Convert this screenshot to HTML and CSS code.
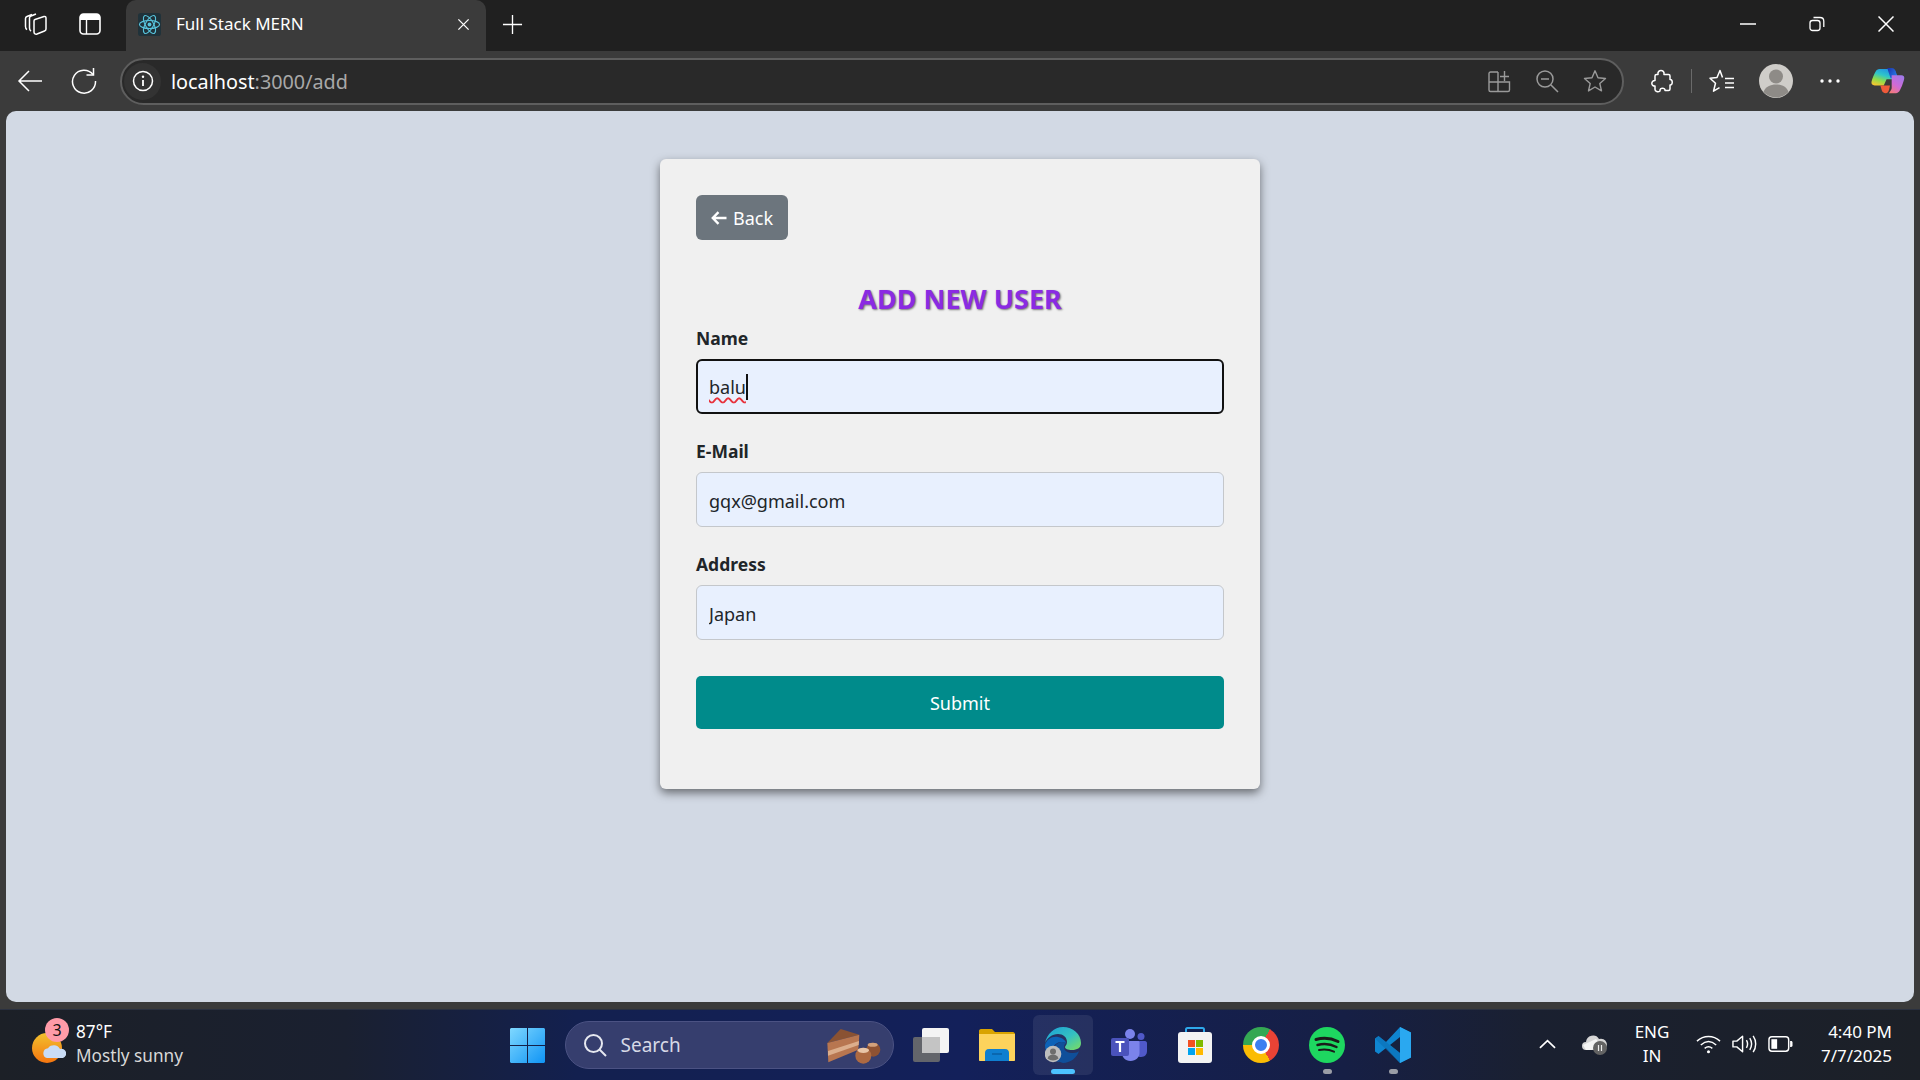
FILE: index.html
```html
<!DOCTYPE html>
<html lang="en">
<head>
    <meta charset="UTF-8">
    <meta name="viewport" content="width=device-width, initial-scale=1.0">
    <title>Full Stack MERN</title>
    <link rel="stylesheet" href="styles.css">
</head>
<body>
    <!-- Tab strip -->
    <header class="tabstrip">
        <div class="strip-left">
            <svg class="strip-icon" viewBox="0 0 26 26" fill="none" stroke="#fff" stroke-width="1.5"><path d="M9 3.500 4 5.500c-1 .4-1.500 1-1.500 2v8c0 1.500.5 2.500 1.500 3.200"/><path d="M13 3 8 5c-1 .4-1.500 1-1.500 2v10c0 1.500.5 2.500 1.500 3.200"/><path d="M12 8.500 21 5.500c1-.3 2 .3 2 1.500v11c0 1-.5 1.700-1.500 2L14 23c-1.500.5-3-.3-3-2V10c0-.7.4-1.300 1-1.500Z"/></svg>
            <svg class="strip-icon" viewBox="0 0 26 26"><rect x="3" y="3" width="20" height="20" rx="3.500" fill="none" stroke="#fff" stroke-width="1.600"/><path d="M3 6.500C3 4.500 4.500 3 6.500 3h13C21.500 3 23 4.500 23 6.500V9H3Z" fill="#fff"/><path d="M9.500 9v14" stroke="#fff" stroke-width="1.400"/></svg>
        </div>
        <div class="tab">
            <svg class="favicon" viewBox="0 0 24 24"><rect width="24" height="24" rx="3" fill="#20323a"/><g fill="none" stroke="#58c4dc" stroke-width="1.200"><ellipse cx="12" cy="12" rx="10.500" ry="4.200"/><ellipse cx="12" cy="12" rx="10.500" ry="4.200" transform="rotate(60 12 12)"/><ellipse cx="12" cy="12" rx="10.500" ry="4.200" transform="rotate(120 12 12)"/></g><circle cx="12" cy="12" r="2" fill="#58c4dc"/></svg>
            <span class="tab-title">Full Stack MERN</span>
            <svg class="tab-close" viewBox="0 0 14 14" stroke="#fff" stroke-width="1.400"><path d="M1.500 1.500l11 11M12.500 1.500l-11 11"/></svg>
        </div>
        <svg class="new-tab" viewBox="0 0 22 22" stroke="#fff" stroke-width="1.400"><path d="M11 1v20M1 11h20"/></svg>
        <div class="window-controls">
            <svg viewBox="0 0 16 16" stroke="#fff" stroke-width="1.500"><path d="M0 8h16"/></svg>
            <svg viewBox="0 0 16 16" fill="none" stroke="#fff" stroke-width="1.300"><rect x="1" y="4.500" width="10" height="10" rx="2.500"/><path d="M4.500 1.500h6.500c2.200 0 3.800 1.600 3.800 3.800V11"/></svg>
            <svg viewBox="0 0 16 16" stroke="#fff" stroke-width="1.500"><path d="M.5.500l15 15M15.500.500l-15 15"/></svg>
        </div>
    </header>

    <!-- Toolbar -->
    <nav class="toolbar">
        <svg class="nav-icon nav-back" viewBox="0 0 26 26" fill="none" stroke="#fff" stroke-width="1.500"><path d="M25 13H2M12 3 2 13l10 10"/></svg>
        <svg class="nav-icon nav-reload" viewBox="0 0 26 26" fill="none" stroke="#fff" stroke-width="1.500"><path d="M22 6.500A11.500 11.500 0 1 0 24.500 13"/><path d="M22.500 0v7h-7"/></svg>
        <div class="addressbar">
            <span class="site-info">
                <svg viewBox="0 0 22 22"><circle cx="11" cy="11" r="9.500" fill="none" stroke="#fff" stroke-width="1.500"/><path d="M11 10v6" stroke="#fff" stroke-width="1.800"/><circle cx="11" cy="6.800" r="1.200" fill="#fff"/></svg>
            </span>
            <span class="url"><b>localhost</b>:3000/add</span>
            <div class="address-actions">
                <svg viewBox="0 0 24 24" fill="none" stroke="#9a9a9a" stroke-width="1.400"><path d="M11 3H3.500C2.700 3 2 3.700 2 4.500V21c0 .8.700 1.500 1.500 1.500H21c.8 0 1.500-.7 1.500-1.500V13H2M11 3v19.500M13 7.500h9M17.500 2v10"/></svg>
                <svg viewBox="0 0 24 24" fill="none" stroke="#9a9a9a" stroke-width="1.500"><circle cx="10" cy="10" r="8"/><path d="M6 10h8M16 16l7 7"/></svg>
                <svg viewBox="0 0 24 24" fill="none" stroke="#9a9a9a" stroke-width="1.400"><path d="M12 1.800l3 7 7.500.7-5.700 5 1.700 7.400-6.500-3.900-6.500 3.900 1.700-7.400-5.700-5 7.500-.7Z" stroke-linejoin="round"/></svg>
            </div>
        </div>
        <svg class="tool-icon tool-ext" viewBox="0 0 24 24" fill="none" stroke="#fff" stroke-width="1.500" stroke-linejoin="round"><path d="M9 5.500C8.500 2.500 10.500 1.500 12 1.500s3.500 1 3 4h4.500c.8 0 1.500.7 1.500 1.500v3.500c3-.5 3 6 0 5.500V20c0 .8-.7 1.500-1.500 1.500H16c.5-3-5.500-3.500-5 .5-2 1.500-5 .5-5-1.500V17c-4 .5-4.500-5.500 0-5.500V7c0-.8.700-1.500 1.500-1.500Z"/></svg>
        <span class="tool-divider"></span>
        <svg class="tool-icon tool-fav" viewBox="0 0 26 24" fill="none" stroke="#fff" stroke-width="1.500" stroke-linejoin="round"><path d="M13.500 8.500 11 1.500 8 8.500l-7 .7 5.500 5-2 8 6-3.500"/><path d="M16 9.500h9M16 14h9M16 18.500h9"/></svg>
        <svg class="tool-icon tool-avatar" viewBox="0 0 34 34"><circle cx="17" cy="17" r="17" fill="#cfcdc9"/><circle cx="17" cy="12.500" r="7" fill="#8e8b87"/><path d="M4.500 28c2-5.500 7-7.500 12.500-7.500S27.500 22.500 29.500 28a17 17 0 0 1-25 0Z" fill="#8e8b87"/></svg>
        <svg class="tool-icon tool-more" viewBox="0 0 20 4" fill="#fff"><circle cx="2" cy="2" r="1.700"/><circle cx="10" cy="2" r="1.700"/><circle cx="18" cy="2" r="1.700"/></svg>
        <svg class="tool-icon tool-copilot" viewBox="15 18 120 96">
            <defs>
                <linearGradient id="cpA" x1="0.7" y1="0" x2="0.2" y2="1"><stop offset="0" stop-color="#1f8fe8"/><stop offset=".4" stop-color="#2fc6c8"/><stop offset=".7" stop-color="#8fdc4a"/><stop offset="1" stop-color="#f7c62f"/></linearGradient>
                <linearGradient id="cpB" x1="0" y1="0" x2="1" y2="0.600"><stop offset="0" stop-color="#1a2fa8"/><stop offset="1" stop-color="#2a7be8"/></linearGradient>
                <linearGradient id="cpC" x1="0.800" y1="0" x2="0.200" y2="1"><stop offset="0" stop-color="#a07ae8"/><stop offset=".55" stop-color="#d06ad8"/><stop offset="1" stop-color="#f47a7a"/></linearGradient>
            </defs>
            <path d="M45 24h42c10 0 14 6 16 14l7 22H70L60 82H28c-9 0-13-7-11-14 3-12 8-26 14-35 3-6 8-9 14-9Z" fill="url(#cpA)"/>
            <path d="M72 20h15c10 0 14 6 16 14l7 22H84L76 32c-1-5-2-9-4-12Z" fill="url(#cpB)"/>
            <path d="M88 46h34c8 0 12 5 10 13-3 13-10 32-15 40-3 6-8 10-14 10H78c5-5 8-10 10-17Z" fill="url(#cpC)"/>
            <path d="M48 82h34l-3 14c-2 8-6 13-12 13-8 0-12-4-14-10Z" fill="#ef5a3a"/>
        </svg>
    </nav>

    <!-- Page -->
    <div class="viewport">
        <main class="page">
            <div class="card">
                <a class="btn-back" href="#">
                    <svg viewBox="0 0 16 14" fill="none" stroke="#fff" stroke-width="2.400"><path d="M15.500 7H2M7.500 1.200 1.800 7l5.700 5.800"/></svg>
                    Back
                </a>
                <h3 class="form-title">ADD NEW USER</h3>
                <form>
                    <div class="form-group">
                        <label>Name</label>
                        <div class="form-input focused"><span class="misspelled">balu</span><span class="caret"></span></div>
                    </div>
                    <div class="form-group">
                        <label for="email">E-Mail</label>
                        <input class="form-input" id="email" type="text" value="gqx@gmail.com">
                    </div>
                    <div class="form-group">
                        <label for="address">Address</label>
                        <input class="form-input" id="address" type="text" value="Japan">
                    </div>
                    <button class="btn-submit" type="button">Submit</button>
                </form>
            </div>
        </main>
    </div>

    <!-- Taskbar -->
    <footer class="taskbar">
        <div class="weather">
            <div class="weather-icon">
                <svg viewBox="0 0 34 32">
                    <defs><linearGradient id="sun" x1="0" y1="0" x2="0" y2="1"><stop offset="0" stop-color="#f2c12e"/><stop offset="1" stop-color="#f5750f"/></linearGradient></defs>
                    <circle cx="15" cy="16" r="15" fill="url(#sun)"/>
                    <path d="M15 26a5 5 0 0 1 1-9.800 7 7 0 0 1 12 .8 4.500 4.500 0 0 1 3 9Z" fill="#c9dcf6"/>
                </svg>
                <span class="badge">3</span>
            </div>
            <div class="weather-text">
                <span class="temp">87°F</span>
                <span class="cond">Mostly sunny</span>
            </div>
        </div>

        <div class="apps">
            <span class="app">
                <svg class="ic-start" viewBox="0 0 35 35">
                    <defs><linearGradient id="win" x1="0" y1="0" x2="1" y2="1"><stop offset="0" stop-color="#7fd8ff"/><stop offset="1" stop-color="#0f94f5"/></linearGradient></defs>
                    <path d="M1.500 0H17v17H0V1.500C0 .7.700 0 1.500 0ZM18 0h15.500c.8 0 1.500.7 1.500 1.500V17H18ZM0 18h17v17H1.500C.7 35 0 34.300 0 33.500ZM18 18h17v15.500c0 .8-.7 1.500-1.500 1.500H18Z" fill="url(#win)"/>
                </svg>
            </span>
            <div class="searchbox">
                <svg class="search-glass" viewBox="0 0 24 24" fill="none" stroke="#e6e8f0" stroke-width="2"><circle cx="10.500" cy="10.500" r="8.500"/><path d="M16.500 16.500 23 23"/></svg>
                <span class="search-label">Search</span>
                <svg class="search-art" viewBox="0 0 210 132">
                    <path d="M22 60 62 18l56 17Z" fill="#8a5233"/>
                    <path d="M22 60 118 35l-3 45-90 38Z" fill="#b87650"/>
                    <path d="M24 84 117 54l-1 12-92 32Z" fill="#dcae8c"/>
                    <circle cx="160" cy="80" r="21" fill="#8f5232"/>
                    <circle cx="130" cy="98" r="24" fill="#ad6a42"/>
                    <ellipse cx="130" cy="82" rx="17" ry="8" fill="#e9c6a8"/>
                    <ellipse cx="158" cy="65" rx="15" ry="6" fill="#d2a17c"/>
                </svg>
            </div>
            <span class="app">
                <svg class="ic-28" viewBox="0 0 36 34">
                    <rect x="9" y="0" width="27" height="25" rx="2" fill="#f4f4f4"/>
                    <rect x="0" y="9" width="27" height="25" rx="2" fill="#6d6d6d" fill-opacity=".9"/>
                    <rect x="9" y="9" width="18" height="16" fill="#c4c4c4"/>
                </svg>
            </span>
            <span class="app">
                <svg class="ic-36" viewBox="0 0 36 32">
                    <path d="M0 2c0-1 .7-2 2-2h11l3 3h18c1 0 2 1 2 2v3H0Z" fill="#d9a300"/>
                    <path d="M0 5h36v26c0 .6-.4 1-1 1H1c-.6 0-1-.4-1-1Z" fill="#fdd35c"/>
                    <path d="M6 32V24c0-2 1-4 4-4h16c3 0 4 2 4 4v8Z" fill="#0f7fd0"/>
                    <path d="M13 25h10" stroke="#0a5fa5" stroke-width="1.500"/>
                </svg>
            </span>
            <span class="app app-active">
                <svg class="ic-36" viewBox="0 0 36 36">
                    <defs>
                        <linearGradient id="edgeA" x1="0" y1="0" x2="1" y2="1"><stop offset="0" stop-color="#1a9fd8"/><stop offset=".55" stop-color="#35c1c1"/><stop offset="1" stop-color="#7ddf5d"/></linearGradient>
                    </defs>
                    <path d="M18 0c10 0 18 7 18 16 0 5-4 7-9 7-4 0-7-1-7-3 0-1 2-2 2-5 0-5-4-8-9-8-6 0-11 4-13 9C2 7 9 0 18 0Z" fill="url(#edgeA)"/>
                    <path d="M0 18c2-6 7-9 13-8 5 1 8 4 8 6-4-2-11-1-13 5-1 5 1 10 7 14C6 34 0 27 0 18Z" fill="#0c62b8"/>
                    <path d="M15 35c-5-4-7-9-6-14 2-6 9-7 12-5-1 1-2 2-2 4 0 4 4 6 9 6 3 0 5-1 6-2-2 7-9 12-16 12Z" fill="#0f4f9a"/>
                    <circle cx="8" cy="27" r="8.300" fill="#bdbdbd"/>
                    <circle cx="8" cy="24.500" r="3" fill="#6d6d6d"/>
                    <path d="M2.500 31.500c1-3 3-4 5.500-4s4.500 1 5.500 4a8.300 8.300 0 0 1-11 0Z" fill="#6d6d6d"/>
                </svg>
                <span class="indicator active"></span>
            </span>
            <span class="app">
                <svg class="ic-36" viewBox="0 0 36 32">
                    <circle cx="19" cy="5" r="5" fill="#7b83eb"/>
                    <circle cx="30" cy="7.500" r="3.500" fill="#5059c9"/>
                    <path d="M25 12h9c1 0 2 1 2 2v8c0 3-2 6-6 6-2 0-3-.5-5-2Z" fill="#5059c9"/>
                    <path d="M11 12h16c1 0 1.500.7 1.500 1.500V24c0 4-3.500 8-9 8s-8.500-4-8.500-8Z" fill="#7b83eb"/>
                    <rect x="0" y="9" width="18" height="18" rx="2" fill="#4b53bc"/>
                    <path d="M4.500 13h9M9 13v10" stroke="#fff" stroke-width="2.200"/>
                </svg>
            </span>
            <span class="app">
                <svg class="ic-36" viewBox="0 0 36 36">
                    <path d="M9 7V2.500C9 1.500 9.500 1 10.500 1h15c1 0 1.500.5 1.500 1.500V7" fill="none" stroke="#2ea8ea" stroke-width="2"/>
                    <rect x="1" y="5" width="34" height="31" rx="3" fill="#f3f3f3"/>
                    <rect x="11" y="13" width="7" height="7" fill="#f25022"/>
                    <rect x="19" y="13" width="7" height="7" fill="#7fba00"/>
                    <rect x="11" y="21" width="7" height="7" fill="#00a4ef"/>
                    <rect x="19" y="21" width="7" height="7" fill="#ffb900"/>
                </svg>
            </span>
            <span class="app">
                <div class="ic-chrome"><span class="chrome-dot"></span></div>
            </span>
            <span class="app">
                <svg class="ic-36" viewBox="0 0 36 36">
                    <circle cx="18" cy="18" r="18" fill="#1ed760"/>
                    <g fill="none" stroke="#1a1a1a" stroke-linecap="round"><path d="M7 12.500c7-2 15-1.500 22 2" stroke-width="3"/><path d="M8.500 18c6-1.500 13-1 19 2" stroke-width="2.500"/><path d="M10 23c5-1 10-.7 15 1.700" stroke-width="2"/></g>
                </svg>
                <span class="indicator"></span>
            </span>
            <span class="app">
                <svg class="ic-36" viewBox="0 0 36 36">
                    <path d="M25 0 36 5.500v25L25 36 11 21 3.500 27 0 24.500v-13L3.500 9 11 15Z" fill="#0f85d0"/>
                    <path d="M25 0 36 5.500v25L25 36Z" fill="#2aa8f0"/>
                    <path d="M25 10 15 18l10 8Z" fill="#16213f"/>
                    <path d="M3.500 9 25 26v10L0 11.500Z" fill="#0a6fb5" fill-opacity=".6"/>
                </svg>
                <span class="indicator"></span>
            </span>
        </div>

        <div class="tray">
            <svg class="tray-chevron" viewBox="0 0 18 10" fill="none" stroke="#fff" stroke-width="1.800"><path d="M1 9 9 1.500 17 9"/></svg>
            <svg class="tray-cloud" viewBox="0 0 26 22">
                <path d="M4 17a4 4 0 0 1 0-8 7 7 0 0 1 13-3 5.500 5.500 0 0 1 4 11Z" fill="#d6d6d6"/>
                <path d="M1 12 14 6l4 5-8 6H4Z" fill="#f4f4f4"/>
                <circle cx="18" cy="15" r="7" fill="#636363"/>
                <path d="M16.500 12v6M19.500 12v6" stroke="#ececec" stroke-width="1.200"/>
            </svg>
            <div class="tray-lang">ENG<br>IN</div>
            <svg class="tray-wifi" viewBox="0 0 26 20" fill="none" stroke="#fff" stroke-width="1.500"><path d="M1 7c7-6.500 17-6.500 24 0M5 11c5-4.500 11-4.500 16 0M9 14.500c2.500-2 5.500-2 8 0"/><circle cx="13" cy="18" r="1.600" fill="#fff" stroke="none"/></svg>
            <svg class="tray-sound" viewBox="0 0 26 20" fill="none" stroke="#fff" stroke-width="1.500"><path d="M1 7v6h4l6 5V2L5 7Z" stroke-linejoin="round"/><path d="M15 6c1.500 2.500 1.500 5.500 0 8M18.500 4c2.500 4 2.500 8 0 12M22 1.500c3.500 5 3.500 12 0 17"/></svg>
            <svg class="tray-battery" viewBox="0 0 26 18"><rect x="1" y="1.500" width="20.500" height="15" rx="3" fill="none" stroke="#fff" stroke-width="1.500"/><rect x="3.500" y="4" width="6" height="10" fill="#fff"/><path d="M23 6h1c1 0 1.500.7 1.500 1.500v3c0 .8-.5 1.500-1.500 1.500h-1Z" fill="#fff"/></svg>
            <div class="tray-clock">4:40 PM<br>7/7/2025</div>
        </div>
    </footer>
</body>
</html>
```

FILE: styles.css
```css
* {
    margin: 0;
    padding: 0;
    box-sizing: border-box;
}

html, body {
    height: 100%;
    overflow: hidden;
}

body {
    display: flex;
    flex-direction: column;
    height: 1080px;
    font-family: "Noto Sans", "Open Sans", sans-serif;
    background-color: #3b3b3b;
    color: #fff;
}

svg {
    display: block;
    flex: none;
}

/* Tab strip */
.tabstrip {
    display: flex;
    align-items: center;
    height: 51px;
    padding-bottom: 3px;
    background-color: #202020;
    flex: none;
}

.strip-left {
    display: flex;
    align-items: center;
    gap: 28px;
    width: 126px;
    padding-left: 23px;
}

.strip-icon {
    width: 26px;
    height: 26px;
}

.tab {
    display: flex;
    align-items: center;
    align-self: stretch;
    width: 360px;
    margin-bottom: -3px;
    padding: 0 0 3px 12px;
    background-color: #3b3b3b;
    border-radius: 10px 10px 0 0;
}

.favicon {
    width: 23px;
    height: 23px;
}

.tab-title {
    margin-left: 15px;
    padding-bottom: 1px;
    font-size: 17px;
    flex: 1;
}

.tab-close {
    width: 13px;
    height: 13px;
    margin-right: 16px;
}

.new-tab {
    width: 21px;
    height: 21px;
    margin-left: 16px;
}

.window-controls {
    display: flex;
    align-items: center;
    gap: 53px;
    margin-left: auto;
    padding-right: 26px;
}

.window-controls svg {
    width: 16px;
    height: 16px;
}

/* Toolbar */
.toolbar {
    display: flex;
    align-items: center;
    height: 60px;
    flex: none;
    padding-left: 17px;
}

.nav-icon {
    width: 26px;
    height: 26px;
}

.nav-reload {
    margin-left: 28px;
}

.addressbar {
    display: flex;
    align-items: center;
    width: 1504px;
    height: 47px;
    margin-left: 23px;
    padding-left: 2px;
    background-color: #292929;
    border: 2px solid #5e5e5e;
    border-radius: 24px;
}

.site-info {
    display: flex;
    align-items: center;
    justify-content: center;
    width: 37px;
    height: 37px;
    border-radius: 50%;
    background-color: #333;
}

.site-info svg {
    width: 22px;
    height: 22px;
}

.url {
    margin-left: 10px;
    font-size: 19.8px;
    color: #a8a8a8;
}

.url b {
    font-weight: 400;
    color: #fff;
}

.address-actions {
    display: flex;
    align-items: center;
    gap: 24px;
    margin-left: auto;
    padding-right: 15px;
}

.address-actions svg {
    width: 24px;
    height: 24px;
}

.tool-icon {
    width: 24px;
    height: 24px;
}

.tool-ext {
    margin-left: 25px;
}

.tool-divider {
    width: 1px;
    height: 24px;
    margin-left: 18px;
    background-color: #6a6a6a;
}

.tool-fav {
    width: 26px;
    margin-left: 17px;
}

.tool-avatar {
    width: 34px;
    height: 34px;
    margin-left: 24px;
}

.tool-more {
    width: 20px;
    height: 4px;
    margin-left: 27px;
}

.tool-copilot {
    width: 34px;
    height: 30px;
    margin-left: 31px;
}

/* Page */
.viewport {
    flex: none;
    height: 891px;
    padding: 0 6px;
}

.page {
    display: flex;
    justify-content: center;
    align-items: flex-start;
    height: 100%;
    padding-top: 48px;
    background-color: #d2d9e4;
    border-radius: 10px;
}

.card {
    width: 600px;
    height: 630px;
    padding: 36px;
    background-color: #f0f0f0;
    border-radius: 6px;
    box-shadow: 0 4px 10px rgba(0, 0, 0, 0.5);
    color: #212529;
}

.btn-back {
    display: inline-flex;
    align-items: center;
    gap: 6px;
    height: 45px;
    padding: 0 15px;
    font-size: 18px;
    color: #fff;
    text-decoration: none;
    background-color: #6c757d;
    border-radius: 6px;
}

.btn-back svg {
    width: 16px;
    height: 14px;
}

.form-title {
    margin-top: 39px;
    margin-bottom: 7px;
    font-size: 27px;
    line-height: 40px;
    font-weight: 700;
    text-align: center;
    color: #8a2be2;
    text-shadow: 1px 1px 2px rgba(0, 0, 0, 0.5);
}

.form-group {
    margin-bottom: 25px;
}

.form-group label {
    display: block;
    margin-bottom: 9px;
    font-size: 17.5px;
    line-height: 24px;
    font-weight: 700;
}

.form-input {
    display: block;
    width: 100%;
    height: 55px;
    padding: 2px 12px 0;
    font-family: inherit;
    font-size: 18px;
    color: #212529;
    background-color: #e8f0fe;
    border: 1px solid #c4c7cb;
    border-radius: 6px;
    outline: none;
}

.form-input.focused {
    display: flex;
    align-items: center;
    padding: 0 11px;
    border: 2px solid #111;
    line-height: 1;
}

.misspelled {
    text-decoration: underline wavy #e8323c 1.5px;
    text-underline-offset: 3px;
}

.caret {
    width: 2px;
    height: 26px;
    background-color: #111;
}

.btn-submit {
    display: block;
    width: 100%;
    height: 53px;
    margin-top: 36px;
    font-family: inherit;
    font-size: 18px;
    color: #fff;
    background-color: #008b8b;
    border: none;
    border-radius: 5px;
}

/* Taskbar */
.taskbar {
    display: grid;
    grid-template-columns: 1fr auto 1fr;
    align-items: center;
    height: 71px;
    margin-top: 7px;
    flex: none;
    background: linear-gradient(90deg, #1c2027 0%, #1a2030 18%, #13204f 30%, #13205a 50%, #161f45 70%, #1a2030 80%, #1c2027 100%);
    border-top: 1px solid #2b3140;
}

.weather {
    display: flex;
    align-items: center;
    padding-left: 32px;
}

.weather-icon {
    position: relative;
    width: 34px;
    height: 32px;
    margin-top: 6px;
}

.badge {
    position: absolute;
    top: -14px;
    left: 13px;
    width: 24px;
    height: 24px;
    font-size: 16px;
    line-height: 24px;
    text-align: center;
    color: #111;
    background-color: #ff9ba8;
    border-radius: 50%;
}

.weather-text {
    display: flex;
    flex-direction: column;
    margin-left: 10px;
    padding-bottom: 2px;
    font-size: 17.2px;
    line-height: 24px;
}

.cond {
    color: #d8d8d8;
}

.apps {
    display: flex;
    align-items: center;
    gap: 0;
}

.app {
    position: relative;
    display: flex;
    align-items: center;
    justify-content: center;
    width: 66px;
    height: 60px;
    border-radius: 6px;
}

.app-active {
    width: 60px;
    margin: 0 3px;
    background-color: rgba(255, 255, 255, 0.08);
}

.ic-start {
    width: 35px;
    height: 35px;
}

.ic-28 {
    width: 36px;
    height: 34px;
}

.ic-36 {
    width: 36px;
    height: 36px;
}

.ic-chrome {
    display: flex;
    align-items: center;
    justify-content: center;
    width: 36px;
    height: 36px;
    border-radius: 50%;
    background: conic-gradient(from 30deg, #ea4335 0 120deg, #fbbc04 120deg 240deg, #34a853 240deg 360deg);
}

.chrome-dot {
    width: 18px;
    height: 18px;
    background-color: #3c7ff0;
    border: 3px solid #fff;
    border-radius: 50%;
}

.indicator {
    position: absolute;
    left: 50%;
    bottom: 1px;
    width: 9px;
    height: 5px;
    margin-left: -4px;
    background-color: #9a9da6;
    border-radius: 3px;
}

.indicator.active {
    width: 24px;
    margin-left: -12px;
    background-color: #4cc2ff;
}

.searchbox {
    display: flex;
    align-items: center;
    width: 329px;
    height: 48px;
    margin: 0 4px;
    padding-left: 17px;
    background-color: #363e6e;
    border: 1px solid #4b5283;
    border-radius: 24px;
}

.search-glass {
    width: 24px;
    height: 24px;
}

.search-label {
    margin-left: 14px;
    font-size: 19px;
    color: #d6d9e6;
}

.search-art {
    width: 70px;
    height: 44px;
    margin-left: auto;
    margin-right: 3px;
}

.tray {
    display: flex;
    align-items: center;
    justify-content: flex-end;
    padding: 0 28px 2px 0;
}

.tray-chevron {
    width: 17px;
    height: 10px;
}

.tray-cloud {
    width: 26px;
    height: 22px;
    margin-left: 26px;
}

.tray-lang {
    width: 50px;
    margin-left: 19px;
    font-size: 17px;
    line-height: 24px;
    text-align: center;
}

.tray-wifi {
    width: 25px;
    height: 20px;
    margin-left: 19px;
}

.tray-sound {
    width: 25px;
    height: 20px;
    margin-left: 11px;
}

.tray-battery {
    width: 25px;
    height: 18px;
    margin-left: 11px;
}

.tray-clock {
    width: 80px;
    margin-left: 19px;
    font-size: 17px;
    line-height: 24px;
    text-align: right;
}
```
